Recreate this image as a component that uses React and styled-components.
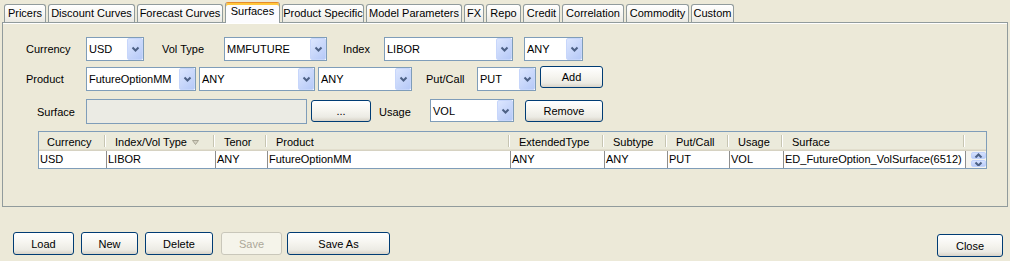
import React from 'react';
import styled, { createGlobalStyle, css } from 'styled-components';

const GlobalStyle = createGlobalStyle`
  html, body {
    margin: 0;
    padding: 0;
    background: #ece9d8;
  }
  body {
    font-family: "Liberation Sans", Arial, sans-serif;
    font-size: 11px;
    color: #000;
  }
  * {
    box-sizing: border-box;
  }
`;

const tabs = [
  { label: 'Pricers', w: 42 },
  { label: 'Discount Curves', w: 87 },
  { label: 'Forecast Curves', w: 86 },
  { label: 'Surfaces', w: 55, active: true },
  { label: 'Product Specific', w: 82 },
  { label: 'Model Parameters', w: 96 },
  { label: 'FX', w: 20 },
  { label: 'Repo', w: 35 },
  { label: 'Credit', w: 37 },
  { label: 'Correlation', w: 62 },
  { label: 'Commodity', w: 63 },
  { label: 'Custom', w: 43 },
];

const columns = [
  { title: 'Currency', w: 68, value: 'USD' },
  { title: 'Index/Vol Type', w: 109, value: 'LIBOR', sorted: true },
  { title: 'Tenor', w: 52, value: 'ANY' },
  { title: 'Product', w: 243, value: 'FutureOptionMM' },
  { title: 'ExtendedType', w: 94, value: 'ANY' },
  { title: 'Subtype', w: 63, value: 'ANY' },
  { title: 'Put/Call', w: 62, value: 'PUT' },
  { title: 'Usage', w: 54, value: 'VOL' },
  { title: 'Surface', w: 182, value: 'ED_FutureOption_VolSurface(6512)' },
];

const Chevron = ({ up }) => (
  <svg width="9" height="6" viewBox="0 0 9 6">
    <polyline
      points={up ? '1.5,4.5 4.5,1.5 7.5,4.5' : '1.5,1.5 4.5,4.5 7.5,1.5'}
      fill="none"
      stroke="#4d6185"
      strokeWidth="2"
    />
  </svg>
);

const SortMark = () => (
  <svg width="7" height="5" viewBox="0 0 7 5">
    <polygon points="0.5,0.5 6.5,0.5 3.5,4.5" fill="#d4d1c2" stroke="#a9a695" strokeWidth="1" />
  </svg>
);

const Combo = ({ value, w, h = 24, ml = 0 }) => (
  <ComboBox $w={w} $h={h} $ml={ml}>
    <ComboText>{value}</ComboText>
    <ArrowButton>
      <Chevron />
    </ArrowButton>
  </ComboBox>
);

const App = () => {
  return (
    <>
      <GlobalStyle />
      <Window>
        <TabStrip>
          {tabs.map((t) => (
            <Tab key={t.label} $w={t.w} $active={t.active}>
              {t.label}
            </Tab>
          ))}
        </TabStrip>

        <Panel>
          <FormRow>
            <Label $w={60}>Currency</Label>
            <Combo value="USD" w={58} />
            <Label $w={62} $ml={18}>Vol Type</Label>
            <Combo value="MMFUTURE" w={103} />
            <Label $w={41} $ml={16}>Index</Label>
            <Combo value="LIBOR" w={129} />
            <Combo value="ANY" w={59} ml={11} />
          </FormRow>

          <FormRow $mt={6}>
            <Label $w={60}>Product</Label>
            <Combo value="FutureOptionMM" w={110} />
            <Combo value="ANY" w={116} ml={3} />
            <Combo value="ANY" w={94} ml={3} />
            <Label $w={51} $ml={14}>Put/Call</Label>
            <Combo value="PUT" w={59} />
            <Button $w={63} $h={22} $ml={4} $top={-1}>Add</Button>
          </FormRow>

          <FormRow $mt={8} $h={25}>
            <Label $w={60} $pl={11}>Surface</Label>
            <TextField $w={221} />
            <Button $w={60} $h={22} $ml={4} $top={1}>...</Button>
            <Label $w={51} $ml={8}>Usage</Label>
            <Combo value="VOL" w={84} h={23} />
            <Button $w={78} $h={22} $ml={11} $top={1}>Remove</Button>
          </FormRow>

          <TableBox>
            <HeaderRow>
              {columns.map((c) => (
                <HeaderCell key={c.title} $w={c.w}>
                  {c.title}
                  {c.sorted && (
                    <SortSlot>
                      <SortMark />
                    </SortSlot>
                  )}
                </HeaderCell>
              ))}
              <Corner />
            </HeaderRow>
            <DataRow>
              {columns.map((c) => (
                <Cell key={c.title} $w={c.w}>
                  {c.value}
                </Cell>
              ))}
              <ScrollColumn>
                <SpinButton>
                  <Chevron up />
                </SpinButton>
                <SpinButton>
                  <Chevron />
                </SpinButton>
              </ScrollColumn>
            </DataRow>
          </TableBox>
        </Panel>

        <ButtonBar>
          <Button $w={61} $h={23}>Load</Button>
          <Button $w={57} $h={23} $ml={7}>New</Button>
          <Button $w={68} $h={23} $ml={7}>Delete</Button>
          <Button $w={61} $h={23} $ml={8} disabled>Save</Button>
          <Button $w={103} $h={23} $ml={5}>Save As</Button>
          <CloseButton $w={66} $h={23} $top={2}>Close</CloseButton>
        </ButtonBar>
      </Window>
    </>
  );
};

export default App;

const Window = styled.div`
  width: 1010px;
  height: 261px;
  overflow: hidden;
  display: flex;
  flex-direction: column;
  background: #ece9d8;
`;

const TabStrip = styled.div`
  display: flex;
  flex-shrink: 0;
  align-items: flex-end;
  gap: 2px;
  height: 22px;
  padding-left: 4px;
  position: relative;
  z-index: 1;
`;

const Tab = styled.div`
  width: ${(p) => p.$w}px;
  height: 18px;
  padding-top: 2px;
  border: 1px solid #919b9c;
  border-bottom: none;
  border-radius: 3px 3px 0 0;
  background: linear-gradient(#ffffff, #f5f4f0 60%, #e9e8e1);
  text-align: center;
  line-height: 13px;
  white-space: nowrap;
  ${(p) =>
    p.$active &&
    css`
      height: 21px;
      margin-bottom: -1px;
      padding-top: 2px;
      border-top: 1px solid #e68b2c;
      box-shadow: inset 0 2px 0 #ffc73c;
      background: #fcfcfe;
    `}
`;

const Panel = styled.div`
  flex-shrink: 0;
  height: 185px;
  margin: 0 2px;
  padding: 14px 0 0 23px;
  border: 1px solid #919b9c;
  box-shadow: inset 0 1px 0 #ffffff;
  background: #ece9d8;
`;

const FormRow = styled.div`
  display: flex;
  align-items: center;
  height: ${(p) => p.$h || 24}px;
  margin-top: ${(p) => p.$mt || 0}px;
`;

const Label = styled.div`
  width: ${(p) => p.$w}px;
  margin-left: ${(p) => p.$ml || 0}px;
  padding-left: ${(p) => p.$pl || 0}px;
  white-space: nowrap;
`;

const ComboBox = styled.div`
  display: flex;
  align-items: center;
  width: ${(p) => p.$w}px;
  height: ${(p) => p.$h}px;
  margin-left: ${(p) => p.$ml}px;
  align-self: flex-start;
  border: 1px solid #7f9db9;
  background: #ffffff;
`;

const ComboText = styled.span`
  flex: 1;
  padding-left: 2px;
  overflow: hidden;
  white-space: nowrap;
`;

const ArrowButton = styled.div`
  display: flex;
  align-items: center;
  justify-content: center;
  width: 16px;
  height: 100%;
  border: 1px solid #c7d6fb;
  border-radius: 2px;
  background: linear-gradient(135deg, #dce6fe, #b6c9f7);
`;

const TextField = styled.div`
  width: ${(p) => p.$w}px;
  height: 25px;
  border: 1px solid #7f9db9;
  background: #ebebe4;
`;

const Button = styled.button`
  display: flex;
  align-items: center;
  justify-content: center;
  align-self: flex-start;
  width: ${(p) => p.$w}px;
  height: ${(p) => p.$h}px;
  margin: 0;
  margin-left: ${(p) => p.$ml || 0}px;
  margin-top: ${(p) => p.$top || 0}px;
  padding: 0;
  border: 1px solid #003c74;
  border-radius: 3px;
  background: linear-gradient(#ffffff, #f6f5f0 45%, #ecebe4 80%, #d8d3c8);
  font-family: inherit;
  font-size: 11px;
  color: #000;
  &:disabled {
    border-color: #c9c7ba;
    background: #f5f4ea;
    color: #aca899;
  }
`;

const CloseButton = styled(Button)`
  margin-left: auto;
  margin-right: 7px;
`;

const TableBox = styled.div`
  width: 949px;
  margin: 7px 0 0 12px;
  border: 1px solid #7f9db9;
`;

const HeaderRow = styled.div`
  display: flex;
  height: 19px;
  background: #ebeadb;
  box-shadow: inset 0 -1px 0 #d6d2c2, inset 0 -2px 0 #e2decd;
`;

const HeaderCell = styled.div`
  position: relative;
  display: flex;
  align-items: center;
  width: ${(p) => p.$w}px;
  padding-left: 8px;
  white-space: nowrap;
  &::after {
    content: '';
    position: absolute;
    right: 2px;
    top: 3px;
    bottom: 4px;
    width: 1px;
    background: #c7c5b2;
    box-shadow: 1px 0 0 #ffffff;
  }
`;

const SortSlot = styled.span`
  display: flex;
  margin-left: 5px;
  margin-top: 1px;
`;

const Corner = styled.div`
  flex: 1;
`;

const DataRow = styled.div`
  display: flex;
  height: 17px;
`;

const Cell = styled.div`
  width: ${(p) => p.$w}px;
  padding-left: 1px;
  border-right: 1px solid #8e8e8e;
  background: #ffffff;
  line-height: 17px;
  white-space: nowrap;
  overflow: hidden;
`;

const ScrollColumn = styled.div`
  flex: 1;
  display: flex;
  flex-direction: column;
  align-items: flex-end;
  justify-content: center;
  gap: 1px;
  background: #f4f3ee;
`;

const SpinButton = styled.div`
  display: flex;
  align-items: center;
  justify-content: center;
  width: 15px;
  height: 7px;
  border: 1px solid #c1d2fb;
  border-radius: 2px;
  background: linear-gradient(#d6e1fd, #b8cbf8);
  overflow: hidden;
`;

const ButtonBar = styled.div`
  display: flex;
  align-items: flex-start;
  flex: 1;
  padding: 25px 0 0 13px;
`;
